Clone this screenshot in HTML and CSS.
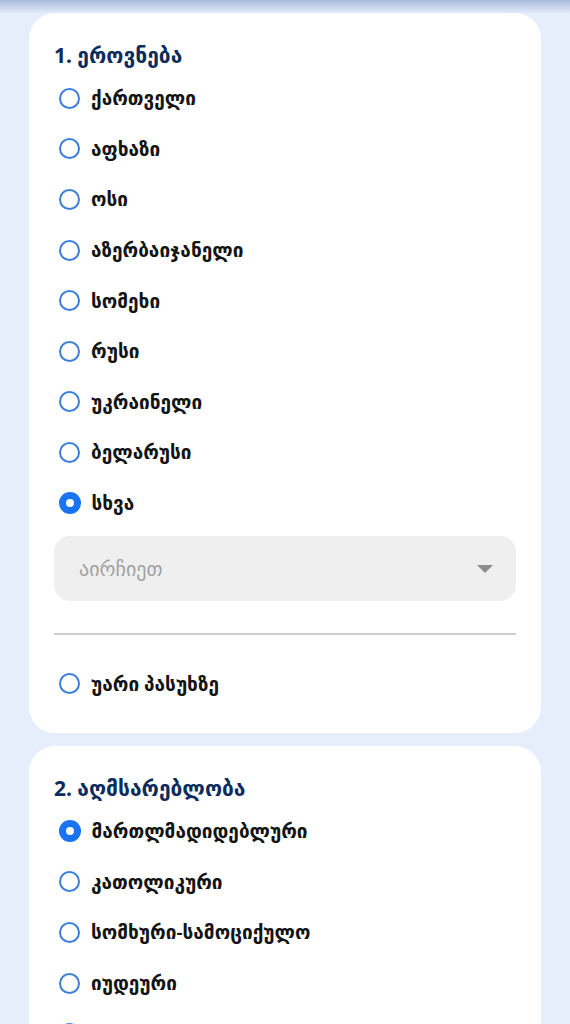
FILE: index.html
```html
<!DOCTYPE html>
<html lang="ka">
<head>
    <meta charset="UTF-8">
    <meta name="viewport" content="width=device-width, initial-scale=1.0">
    <title>კითხვარი</title>
    <link rel="stylesheet" href="styles.css">
</head>
<body>
    <div class="top-shade"></div>
    <div class="page">
        <div class="card">
            <h2 class="question">1. ეროვნება</h2>
            <div class="options">
                <label class="option"><span class="radio"></span>ქართველი</label>
                <label class="option"><span class="radio"></span>აფხაზი</label>
                <label class="option"><span class="radio"></span>ოსი</label>
                <label class="option"><span class="radio"></span>აზერბაიჯანელი</label>
                <label class="option"><span class="radio"></span>სომეხი</label>
                <label class="option"><span class="radio"></span>რუსი</label>
                <label class="option"><span class="radio"></span>უკრაინელი</label>
                <label class="option"><span class="radio"></span>ბელარუსი</label>
                <label class="option"><span class="radio checked"></span>სხვა</label>
            </div>
            <div class="select">
                <span class="placeholder">აირჩიეთ</span>
                <span class="arrow"></span>
            </div>
            <hr class="divider">
            <div class="options">
                <label class="option"><span class="radio"></span>უარი პასუხზე</label>
            </div>
        </div>

        <div class="card">
            <h2 class="question">2. აღმსარებლობა</h2>
            <div class="options">
                <label class="option"><span class="radio checked"></span>მართლმადიდებლური</label>
                <label class="option"><span class="radio"></span>კათოლიკური</label>
                <label class="option"><span class="radio"></span>სომხური-სამოციქულო</label>
                <label class="option"><span class="radio"></span>იუდეური</label>
                <label class="option"><span class="radio"></span>ისლამი</label>
            </div>
        </div>
    </div>
</body>
</html>
```

FILE: styles.css
```css
body {
    margin: 0;
    background-color: #e6eefc;
    font-family: "Noto Sans", "DejaVu Sans", sans-serif;
    color: #141414;
}
.top-shade {
    position: fixed;
    top: 0;
    left: 0;
    right: 0;
    height: 14px;
    background: linear-gradient(to bottom, rgba(120,145,190,0.55), rgba(230,238,252,0));
    z-index: 2;
}
.page {
    padding: 13px 29px 0;
    display: flex;
    flex-direction: column;
    gap: 13px;
}
.card {
    background-color: white;
    border-radius: 26px;
    padding: 28px 25px 24px;
}
.question {
    margin: 0 0 4px;
    font-size: 21px;
    line-height: 28px;
    font-weight: 700;
    color: #0c2c5e;
}
.options {
    display: flex;
    flex-direction: column;
}
.option {
    display: flex;
    align-items: center;
    gap: 11px;
    height: 50.6px;
    padding-left: 5px;
    font-size: 19px;
    font-weight: 600;
}
.radio {
    box-sizing: border-box;
    width: 21px;
    height: 21px;
    border: 2px solid #3b7fd8;
    border-radius: 50%;
    flex-shrink: 0;
}
.radio.checked {
    width: 22px;
    height: 22px;
    margin-left: -0.5px;
    border: 7px solid #1a73f0;
    background-color: white;
}
.select {
    margin-top: 8px;
    height: 65px;
    border-radius: 16px;
    background-color: #efefef;
    display: flex;
    align-items: center;
    justify-content: space-between;
    padding: 0 23px 0 25px;
}
.placeholder {
    font-size: 20px;
    color: #a2a2a2;
}
.arrow {
    width: 0;
    height: 0;
    border-left: 8px solid transparent;
    border-right: 8px solid transparent;
    border-top: 8px solid #8c8c8c;
}
.divider {
    margin: 32px 0 23px;
    border: none;
    border-top: 2px solid #cfcfcf;
}
```
